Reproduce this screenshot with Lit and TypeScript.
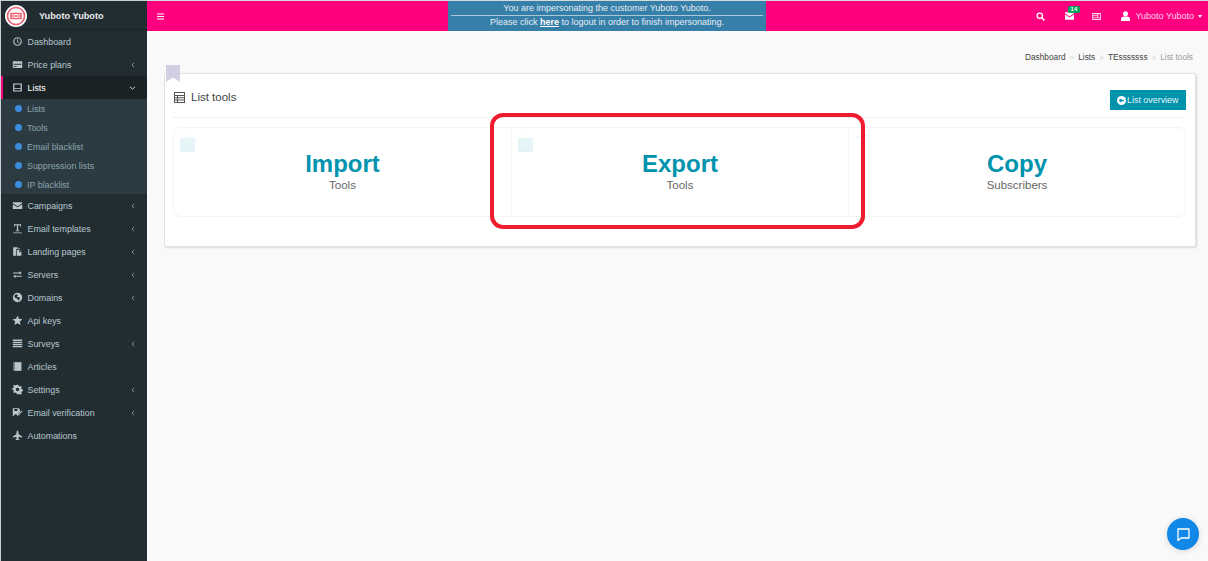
import { LitElement, html, css, svg } from "lit";
import { customElement } from "lit/decorators.js";

const ic = (d: unknown) => html`<svg class="ic" viewBox="0 0 14 14" fill="currentColor">${d}</svg>`;
const icons: Record<string, unknown> = {
  dash: svg`<path fill-rule="evenodd" d="M7 1.500a5.500 5.500 0 1 0 0 11 5.500 5.500 0 0 0 0-11Zm0 1.500a4 4 0 1 1 0 8 4 4 0 0 1 0-8Z"/><path d="M6.500 4h1v3.200L9.500 8l-.4.9L6.500 8Z"/>`,
  card: svg`<path fill-rule="evenodd" d="M1 3h12v8.500H1ZM2 6v1.200h10V6ZM2 9v1h4V9Z"/>`,
  list: svg`<path fill-rule="evenodd" d="M1.500 2h11v10h-11ZM3 3.300v4.500h8V3.300ZM3 9v1.700h8V9Z"/>`,
  mail: svg`<path d="M1 3h12v1L7 8 1 4Zm0 2.400L7 9.300l6-3.900V11.500H1Z"/>`,
  text: svg`<path d="M2.500 1.500h9v3h-1l-.5-1.700H7.800v6.900h1.400v.8H4.800v-.8h1.400V2.800H4L3.500 4.500h-1ZM1.500 12h11v1h-11Z"/>`,
  page: svg`<path d="M1.500 1.500h5.500v2.500h-2v8.500H1.500Z"/><path fill-rule="evenodd" d="M6 5h3v3h3v4.500H6ZM10 5l2 2h-2Z"/><path d="M8 1.500l2.500 2.500H8Z"/>`,
  swap: svg`<path d="M1.500 4.500h8V3L12.500 5.200 9.500 7V5.800h-8ZM12.500 8.500h-8V7.300L1.500 9.300l3 2.200v-1.500h8Z"/>`,
  globe: svg`<path fill-rule="evenodd" d="M7 1a6 6 0 1 0 0 12A6 6 0 0 0 7 1ZM4 3.500l2.500-.5 1 1.500L6 5.800l1.500 1 2-.2.8 1.500L8 11 6.800 8.500 4 7.200 3 5.300Z"/>`,
  star: svg`<path d="m7 .8 1.900 4 4.400.5-3.300 3 .9 4.400L7 10.500l-3.900 2.200.9-4.400-3.300-3 4.400-.5Z"/>`,
  rows: svg`<path d="M1 2h12v1.700H1Zm0 2.700h12v1.700H1Zm0 2.700h12v1.700H1Zm0 2.700h12v1.700H1Z"/>`,
  book: svg`<path d="M2 1.500h10v11H2Z"/><path d="M3.200 1.500v11" stroke="#222d32" stroke-width=".5"/>`,
  gear: svg`<path fill-rule="evenodd" d="M6 1h2l.4 1.700 1.300.6 1.500-.9 1.400 1.400-.9 1.500.5 1.300 1.800.4v2l-1.800.4-.5 1.300.9 1.500-1.400 1.400-1.500-.9-1.300.5L8 13H6l-.4-1.800-1.300-.5-1.500.9L1.400 10.200l.9-1.500-.5-1.300L0 7V5.600l1.800-.4.5-1.300-.9-1.500 1.400-1.400 1.500.9 1.300-.6ZM7 4.800a2.200 2.200 0 1 0 0 4.400 2.200 2.200 0 0 0 0-4.400Z"/>`,
  verify: svg`<path fill-rule="evenodd" d="M1 1.500h7.500L10 3v3.500L6.500 10 5 8.500 1 12ZM3 2.500V5h4V2.500Z"/><path d="m6.500 8.500 1 1 5-5 1 1-6 6-2-2Z"/>`,
  plane: svg`<path d="M6.200 1h1.600l.7 4.300 4.500 3v1.300L8.500 8.500 8.200 11l1.300 1v1L7 12.300 4.500 13v-1l1.300-1-.3-2.500-4.500 1.100V8.300l4.500-3Z"/>`,
};

const before = [
  { i: "dash", t: "Dashboard" },
  { i: "card", t: "Price plans", c: 1 },
];
const subs = ["Lists", "Tools", "Email blacklist", "Suppression lists", "IP blacklist"];
const after = [
  { i: "mail", t: "Campaigns", c: 1 },
  { i: "text", t: "Email templates", c: 1 },
  { i: "page", t: "Landing pages", c: 1 },
  { i: "swap", t: "Servers", c: 1 },
  { i: "globe", t: "Domains", c: 1 },
  { i: "star", t: "Api keys" },
  { i: "rows", t: "Surveys", c: 1 },
  { i: "book", t: "Articles" },
  { i: "gear", t: "Settings", c: 1 },
  { i: "verify", t: "Email verification", c: 1 },
  { i: "plane", t: "Automations" },
];
const chevL = html`<svg class="chev" viewBox="0 0 6 8"><path d="M4.500 1 1.800 4l2.700 3" fill="none" stroke="currentColor" stroke-width="1.100"/></svg>`;
const chevD = html`<svg class="chev" viewBox="0 0 8 6"><path d="M1 1.500 4 4.300l3-2.800" fill="none" stroke="currentColor" stroke-width="1.100"/></svg>`;

@customElement("app-root")
export class AppRoot extends LitElement {
  static styles = css`
    :host { display: block; width: 1208px; height: 561px; overflow: hidden; position: relative; font-family: "Liberation Sans", Arial, sans-serif; background: #f9f9f9; color: #444; }
    * { box-sizing: border-box; }
    .app { display: grid; grid-template-columns: 147px 1fr; height: 561px; }
    .side { background: #222d32; border-left: 1px solid #c9ced0; border-top: 1px solid #c9ced0; display: flex; flex-direction: column; }
    .brand { height: 29px; flex: none; display: flex; align-items: center; padding: 1px 0 0 4px; gap: 12px; color: #e6e9ea; font-weight: 700; font-size: 9.200px; border-bottom: 1px solid #1b2428; }
    .logo { width: 22px; height: 22px; display: block; }
    .item { height: 23px; flex: none; display: flex; align-items: center; padding-left: 11px; padding-right: 11px; font-size: 8.900px; color: #b8c7ce; }
    .item .ic { width: 11px; height: 11px; margin-right: 4.500px; flex: none; }
    .item span { flex: 1; }
    .chev { width: 6px; height: 6px; flex: none; color: #8aa4af; }
    .item.active { background: #1a2226; color: #fff; border-left: 2px solid #ff007f; padding-left: 9px; }
    .item.active .chev { color: #cfd8dc; width: 7px; }
    .item.active .ic { color: #c4cfd4; }
    .sub { background: #2c3b41; height: 95px; flex: none; display: flex; flex-direction: column; }
    .sub div { height: 19px; display: flex; align-items: center; padding-left: 14px; gap: 5px; font-size: 8.900px; color: #8aa4af; }
    .dot { width: 7px; height: 7px; border-radius: 50%; background: #3c8dde; flex: none; }
    .main { display: flex; flex-direction: column; min-width: 0; }
    .top { height: 31px; flex: none; background: #ff007f; border-top: 1px solid #d4d9db; display: grid; grid-template-columns: 301px 318px 1fr; color: #fff; }
    .burger { display: flex; align-items: center; padding-left: 9px; }
    .burger svg { width: 9px; height: 9px; }
    .imp { background: #367fa9; color: #e6eef3; font-size: 9px; text-align: center; display: flex; flex-direction: column; padding: 0 3px; }
    .imp div { line-height: 14px; height: 14px; flex: none; }
    .imp div:last-child { line-height: 13px; }
    .imp hr { border: 0; border-top: 1px solid #a9c8da; margin: 0; }
    .imp a { color: #fff; font-weight: 700; text-decoration: underline; }
    .tools { display: flex; align-items: center; justify-content: flex-end; padding-right: 6px; font-size: 9px; }
    .tools svg { display: block; }
    .t-search { width: 9px; height: 9px; margin-right: 20px; }
    .t-mail { position: relative; margin-right: 18px; }
    .t-mail svg { width: 9px; height: 8px; }
    .badge { position: absolute; top: -6px; left: 3px; background: #00a65a; color: #fff; font-size: 6px; font-weight: 700; padding: 0 2.500px; border-radius: 2px; line-height: 7px; height: 7px; }
    .t-news { width: 9px; height: 7px; margin-right: 20px; opacity: .85; }
    .t-user { width: 9px; height: 10px; margin-right: 5.500px; }
    .uname { color: #ffd4ea; margin-right: 4px; }
    .caret { width: 0; height: 0; border-left: 2.500px solid transparent; border-right: 2.500px solid transparent; border-top: 3px solid #fff; }
    .content { flex: 1; padding: 20px 12px 0 17px; }
    .crumbs { display: flex; justify-content: flex-end; align-items: center; height: 12px; margin-right: 3px; font-size: 8.300px; color: #444; gap: 4px; }
    .crumbs i { font-style: normal; color: #ccc; font-size: 8px; }
    .crumbs b { font-weight: 400; color: #999; }
    .panel { position: relative; margin-top: 10px; height: 174px; background: #fff; border: 1px solid #e3e3e3; border-radius: 2px; box-shadow: 1px 1px 2px rgba(0,0,0,.14); padding: 0 9px 0 8px; display: flex; flex-direction: column; }
    .mark { position: absolute; left: 1px; top: -9px; width: 14px; height: 17px; }
    .head { height: 44px; flex: none; display: flex; align-items: center; justify-content: space-between; border-bottom: 1px solid #f0f0f0; padding-top: 3px; }
    .title { display: flex; align-items: center; gap: 6px; font-size: 11.500px; color: #444; padding-left: 1px; }
    .title svg { width: 11px; height: 11px; color: #555; }
    .btn { width: 76px; height: 20px; background: #0093ad; color: #e8f6f9; display: flex; align-items: center; justify-content: center; gap: 1.500px; font-size: 8.900px; margin-top: 6px; padding-right: 1px; }
    .btn svg { width: 9px; height: 9px; }
    .cards { margin-top: 9px; height: 90px; flex: none; display: grid; grid-template-columns: 337px 337px 337px; border: 1px solid #f4f4f4; border-radius: 8px; }
    .tile { position: relative; display: flex; flex-direction: column; align-items: center; padding-top: 22px; }
    .tile + .tile { border-left: 1px solid #f5f5f5; }
    .tile h2 { margin: 0; font-size: 24px; line-height: 28px; color: #0093ad; font-weight: 700; }
    .tile p { margin: 0; font-size: 11.500px; line-height: 14px; color: #666; }
    .tile-ic { position: absolute; left: 6px; top: 6px; width: 15px; height: 18px; }
    .focus { position: absolute; left: 490px; top: 113px; width: 375px; height: 116px; border: 4px solid #ee1c2e; border-radius: 13px; pointer-events: none; }
    .chat { position: absolute; left: 1167px; top: 518px; width: 32px; height: 32px; border-radius: 50%; background: #1188e8; display: flex; align-items: center; justify-content: center; box-shadow: 0 1px 6px rgba(0,0,0,.14); }
    .chat svg { width: 15px; height: 15px; }
  `;

  private row(r: { i: string; t: string; c?: number }) {
    return html`<div class="item">${ic(icons[r.i])}<span>${r.t}</span>${r.c ? chevL : ""}</div>`;
  }

  render() {
    return html`
      <div class="app">
        <aside class="side">
          <div class="brand">
            <svg class="logo" viewBox="0 0 22 22">
              <circle cx="11" cy="11" r="11" fill="#fff"/>
              <circle cx="11" cy="11" r="8.500" fill="none" stroke="#ef5a6c" stroke-width="1.600"/>
              <path d="M6 8.500h10v5H6Z" fill="none" stroke="#ef5a6c" stroke-width="1.500"/>
              <path d="M6 11h10" stroke="#ef5a6c" stroke-width="1.200"/>
            </svg>
            <span>Yuboto Yuboto</span>
          </div>
          ${before.map((r) => this.row(r))}
          <div class="item active">${ic(icons.list)}<span>Lists</span>${chevD}</div>
          <div class="sub">${subs.map((s) => html`<div><i class="dot"></i>${s}</div>`)}</div>
          ${after.map((r) => this.row(r))}
        </aside>
        <div class="main">
          <header class="top">
            <div class="burger"><svg viewBox="0 0 9 9" fill="#fff"><path d="M1 1.500h7v1H1Zm0 2.500h7v1H1Zm0 2.500h7v1H1Z"/></svg></div>
            <div class="imp">
              <div>You are impersonating the customer Yuboto Yuboto.</div>
              <hr />
              <div>Please click <a>here</a> to logout in order to finish impersonating.</div>
            </div>
            <div class="tools">
              <svg class="t-search" viewBox="0 0 10 10"><circle cx="4.200" cy="4.200" r="3" fill="none" stroke="#fff" stroke-width="1.400"/><path d="m6.500 6.500 2.800 2.800" stroke="#fff" stroke-width="1.600"/></svg>
              <div class="t-mail">
                <svg viewBox="0 0 11 9" fill="#fff"><path d="M0 0h11v1.200L5.500 5 0 1.200Zm0 2.600L5.500 6.300 11 2.600V9H0Z"/></svg>
                <span class="badge">14</span>
              </div>
              <svg class="t-news" viewBox="0 0 10 8" fill="#fff"><path fill-rule="evenodd" d="M0 0h10v8H0Zm1 1.500v1.200h5V1.500Zm0 2.300V5h5V3.800Zm6-2.300V5h2V1.500Zm-6 4.600v.8h8v-.8Z"/></svg>
              <svg class="t-user" viewBox="0 0 10 11" fill="#fff"><circle cx="5" cy="3" r="2.800"/><path d="M0 11V8.500C0 7 2 6 3.500 6h3C8 6 10 7 10 8.500V11Z"/></svg>
              <span class="uname">Yuboto Yuboto</span>
              <i class="caret"></i>
            </div>
          </header>
          <section class="content">
            <nav class="crumbs">
              <span>Dashboard</span><i>&gt;</i><span>Lists</span><i>&gt;</i><span>TEsssssss</span><i>&gt;</i><b>List tools</b>
            </nav>
            <div class="panel">
              <svg class="mark" viewBox="0 0 14 17"><path d="M0 0h14v17L7 12.500 0 17Z" fill="#d0d0e2"/></svg>
              <div class="head">
                <div class="title">
                  <svg viewBox="0 0 11 11" fill="currentColor"><path fill-rule="evenodd" d="M0 0h11v11H0Zm1 1v2h9V1Zm0 3v1.200h2V4Zm3 0v1.200h6V4ZM1 6.200v1.200h2V6.200Zm3 0v1.200h6V6.200ZM1 8.400V10h2V8.400Zm3 0V10h6V8.400Z"/></svg>
                  <span>List tools</span>
                </div>
                <div class="btn">
                  <svg viewBox="0 0 9 9"><circle cx="4.500" cy="4.500" r="4.500" fill="#fff"/><path d="M7 3.800H4.300V2.300L1.700 4.500l2.600 2.200V5.200H7Z" fill="#0093ad"/></svg>
                  <span>List overview</span>
                </div>
              </div>
              <div class="cards">
                <div class="tile">
                  <svg class="tile-ic" viewBox="0 0 15 18"><path d="M0 4h15v14H0Z" fill="#e4f4f7"/><path d="M7.500 12V1M4.500 4l3-3 3 3" fill="none" stroke="#f0f9fb" stroke-width="1"/></svg>
                  <h2>Import</h2><p>Tools</p>
                </div>
                <div class="tile">
                  <svg class="tile-ic" viewBox="0 0 15 18"><path d="M0 4h15v14H0Z" fill="#e4f4f7"/><path d="M7.500 1v12M4.500 10l3 3 3-3" fill="none" stroke="#f4fbfc" stroke-width="1"/></svg>
                  <h2>Export</h2><p>Tools</p>
                </div>
                <div class="tile">
                  <svg class="tile-ic" viewBox="0 0 15 18"><path d="M0 5C2 2.500 5 .8 9 .8V0l5 1.200L10 3.500V2.500C6 2.500 3 3.500 0 5Z" fill="#e4f4f7"/></svg>
                  <h2>Copy</h2><p>Subscribers</p>
                </div>
              </div>
            </div>
          </section>
        </div>
      </div>
      <div class="focus"></div>
      <div class="chat">
        <svg viewBox="0 0 15 15"><path d="M2 2h11v9H5l-3 2.500Z" fill="none" stroke="#fff" stroke-width="1.300" stroke-linejoin="round"/></svg>
      </div>
    `;
  }
}
